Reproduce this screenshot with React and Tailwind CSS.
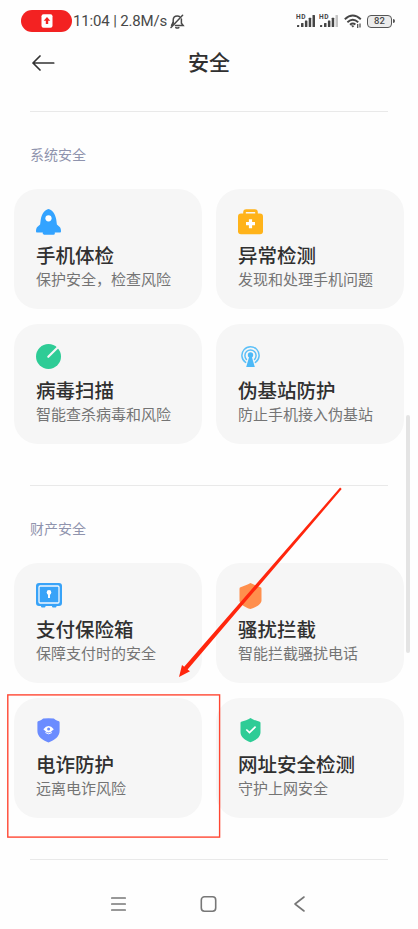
const RocketIcon = () => (
  <svg width="26" height="26" viewBox="0 0 26 26" fill="none">
    <path
      d="M12.5 0C16.4 .6 19.4 5.4 20.2 10.2L20.9 15.6L24 18.2C24.8 19.4 25 20.8 25 22.2C25 23.1 24.6 23.4 23.8 23.4H18.8V24.6C18.8 25.4 18.4 25.8 17.6 25.8H8C7.2 25.8 6.8 25.4 6.8 24.6V23.4H1.2C.4 23.4 0 23.1 0 22.2C0 20.8.2 19.4 1 18.2L4.1 15.6L4.8 10.2C5.6 5.4 8.6 .6 12.5 0Z"
      fill="#33a3ff"
    />
    <circle cx="12.5" cy="9.3" r="3.1" fill="#fff" />
  </svg>
);

const MedkitIcon = () => (
  <svg width="26" height="26" viewBox="0 0 26 26" fill="none">
    <path d="M6.5 6V3.3A1.7 1.7 0 0 1 8.2 1.6H16.8A1.7 1.7 0 0 1 18.5 3.3V6" stroke="#ffb31a" strokeWidth="2.6" />
    <rect x="0" y="4.5" width="25" height="20.8" rx="3" fill="#ffb31a" />
    <path d="M12.5 10.2V19.2M8 14.7H17" stroke="#fff" strokeWidth="3.2" />
  </svg>
);

const ScanIcon = () => (
  <svg width="26" height="26" viewBox="0 0 26 26" fill="none">
    <circle cx="12.5" cy="12.5" r="12.5" fill="#2ecc96" />
    <path d="M12.3 12.8L21.9 3.2" stroke="#f6f6f6" strokeWidth="2.2" strokeLinecap="round" />
  </svg>
);

const StationIcon = () => (
  <svg width="26" height="26" viewBox="0 0 26 26" fill="none">
    <path d="M7.6 18.4A8.6 8.6 0 1 1 17.4 18.4" stroke="#5cc0f8" strokeWidth="1.5" strokeLinecap="round" />
    <path d="M8.4 15.4A5.6 5.6 0 1 1 16.6 15.4" stroke="#5cc0f8" strokeWidth="1.5" strokeLinecap="round" />
    <circle cx="12.5" cy="10.9" r="2.7" fill="#4db9f7" />
    <path d="M11.4 12H13.6L16.8 23H8.2Z" fill="#4db9f7" />
  </svg>
);

const SafeIcon = () => (
  <svg width="26" height="26" viewBox="0 0 26 26" fill="none">
    <path d="M5 22H9.5V23.6A.8.8 0 0 1 8.7 24.4H5.8A.8.8 0 0 1 5 23.6ZM16 22H20.5V23.6A.8.8 0 0 1 19.7 24.4H16.8A.8.8 0 0 1 16 23.6Z" fill="#38a3f8" />
    <rect x="0" y="0" width="26" height="23" rx="3" fill="#38a3f8" />
    <rect x="3" y="3" width="20" height="17" rx="1.2" stroke="#f1f8fe" strokeWidth="1.3" />
    <circle cx="13" cy="9.4" r="2.3" fill="#fff" />
    <path d="M13 10V15" stroke="#fff" strokeWidth="1.9" />
  </svg>
);

const BlockShieldIcon = () => (
  <svg width="26" height="27" viewBox="0 0 26 27" fill="none">
    <path
      d="M12.5 0C15.5 1.6 19 3.2 22.5 4.2C23.2 4.5 23.5 5 23.5 5.8V17.5C23.5 21 18 24.6 12.5 26C7 24.6 1.5 21 1.5 17.5V5.8C1.5 5 1.8 4.5 2.5 4.2C6 3.2 9.5 1.6 12.5 0Z"
      fill="#ff8f4d"
    />
  </svg>
);

const EyeShieldIcon = () => (
  <svg width="26" height="26" viewBox="0 0 26 26" fill="none">
    <path
      d="M7.2 .5Q12.5 -.2 17.8 .5L19.8 2Q21.4 3 23 3.2Q23.6 3.4 23.6 4.4V13C23.6 18.6 18.6 22.2 12.5 24.4C6.4 22.2 1.4 18.6 1.4 13V4.4Q1.4 3.4 2 3.2Q3.6 3 5.2 2Z"
      fill="#6b8cff"
    />
    <path d="M7.4 11.3Q12.5 4.8 17.8 11.3Q12.5 17.6 7.4 11.3Z" fill="#fff" />
    <circle cx="12.6" cy="11" r="1.5" fill="#6b8cff" />
    <path d="M9.4 14.6Q12.6 17 15.8 14.6" stroke="#fff" strokeWidth="1" />
  </svg>
);

const CheckShieldIcon = () => (
  <svg width="26" height="26" viewBox="0 0 26 26" fill="none">
    <path
      d="M12.5 0C15.2 1.7 18.5 3 21.8 3.8C22.3 4 22.5 4.3 22.5 4.9V14.2C22.5 19 18 22.2 12.5 24.3C7 22.2 2.5 19 2.5 14.2V4.9C2.5 4.3 2.7 4 3.2 3.8C6.5 3 9.8 1.7 12.5 0Z"
      fill="#2ecc96"
    />
    <path d="M8.3 11.5L11.5 14.6L17.6 8.6" stroke="#fff" strokeWidth="1.7" />
  </svg>
);

const sections = [
  {
    label: '系统安全',
    items: [
      { title: '手机体检', desc: '保护安全，检查风险', icon: RocketIcon },
      { title: '异常检测', desc: '发现和处理手机问题', icon: MedkitIcon },
      { title: '病毒扫描', desc: '智能查杀病毒和风险', icon: ScanIcon },
      { title: '伪基站防护', desc: '防止手机接入伪基站', icon: StationIcon },
    ],
  },
  {
    label: '财产安全',
    items: [
      { title: '支付保险箱', desc: '保障支付时的安全', icon: SafeIcon },
      { title: '骚扰拦截', desc: '智能拦截骚扰电话', icon: BlockShieldIcon },
      { title: '电诈防护', desc: '远离电诈风险', icon: EyeShieldIcon },
      { title: '网址安全检测', desc: '守护上网安全', icon: CheckShieldIcon },
    ],
  },
];

const Signal = ({ weak }) => (
  <svg width="20" height="14" viewBox="0 0 20 14" fill="#454545">
    <text x="0" y="5.4" fontSize="6.6" fontWeight="700" fontFamily="Roboto, sans-serif" textLength="9.5">
      HD
    </text>
    <rect x="1" y="11" width="2.2" height="2" rx=".5" />
    <rect x="5" y="9" width="2.5" height="4" rx=".5" />
    <rect x="8.9" y="6.4" width="2.5" height="6.6" rx=".5" />
    <rect x="12.7" y="3.8" width="2.5" height="9.2" rx=".5" />
    <rect x="16.5" y="1" width="2.5" height="12" rx=".5" fill={weak ? '#c4c4c4' : '#454545'} />
  </svg>
);

const StatusBar = () => (
  <div className="flex h-[42px] items-center pl-[21px] pr-[23px] text-[#484848]">
    <div className="flex h-[22px] w-[51px] items-center justify-center rounded-full bg-[#f32222]">
      <svg width="12" height="14" viewBox="0 0 12 14" fill="none">
        <rect x=".5" y=".3" width="11" height="13.4" rx="2" fill="#fff" />
        <path d="M6 3L9.3 6.8H7.2V10H4.8V6.8H2.7Z" fill="#f32222" />
      </svg>
    </div>
    <span className="ml-px w-[95px] whitespace-nowrap text-[15px] leading-5 tracking-[-0.15px]">11:04 | 2.8M/s</span>
    <svg className="ml-0.5" width="15" height="15" viewBox="0 0 15 15" fill="none" stroke="#484848" strokeWidth="1.5" strokeLinecap="round">
      <path d="M3.2 9.2V6.2C3.2 3.6 5 2 7.3 2C8.2 2 9 2.2 9.6 2.7M11.4 5V9.2L13.2 11.6H5.4" />
      <path d="M3 8.5L1.6 11.4M5.8 13.6Q7.3 14.6 8.8 13.6M1 13.4L12.6 1.2" />
    </svg>
    <div className="ml-auto flex items-center">
      <Signal />
      <span className="w-[3px]" />
      <Signal weak />
      <svg className="ml-[5px]" width="18" height="15" viewBox="0 0 18 15" fill="none" stroke="#454545" strokeWidth="1.9">
        <path d="M.8 5.2Q8.8-2 16.8 5.2M3.4 8.2Q8.8 3.4 14.2 8.2M6 10.8Q8.8 8.5 11.4 10.6" />
        <path d="M7 11.6L8.8 13.6L10.3 12Q8.6 10.7 7 11.6Z" fill="#454545" stroke="none" />
        <path d="M13.7 10V14M16 9.6V13.4" strokeWidth="1.2" />
      </svg>
      <div className="ml-[5px] flex h-[13px] w-[25px] items-center justify-center rounded-[4px] border border-[#555] bg-[#ececec] text-[9.5px] font-medium leading-none">
        82
      </div>
      <span className="ml-px h-1 w-[2px] rounded-r-sm bg-[#555]" />
    </div>
  </div>
);

const FeatureCard = ({ title, desc, icon: Icon }) => (
  <div className="h-[120px] rounded-[24px] bg-[#f6f6f6] pl-[22px] pt-5">
    <div className="h-[26px]">
      <Icon />
    </div>
    <h3 className="mt-2.5 whitespace-nowrap text-[19.5px] font-medium leading-6 text-[#303030]">{title}</h3>
    <p className="mt-px whitespace-nowrap text-[15px] leading-5 text-[#747474]">{desc}</p>
  </div>
);

const Section = ({ label, items }) => (
  <section className="h-[374px] px-[14px]">
    <div className="mx-4 border-t border-[#e9e9e9]" />
    <h2 className="ml-4 pt-[33px] text-[14px] leading-5 text-[#8f93ad]">{label}</h2>
    <div className="mt-6 grid grid-cols-2 gap-x-[14px] gap-y-[14.5px]">
      {items.map((item) => (
        <FeatureCard key={item.title} {...item} />
      ))}
    </div>
  </section>
);

export default function App() {
  return (
    <div className="relative flex h-[929px] w-[418px] flex-col overflow-hidden bg-[#fefefe] font-['Roboto','Noto_Sans_CJK_SC',sans-serif]">
      <StatusBar />

      <header className="grid h-[42px] grid-cols-3 items-center">
        <svg className="ml-8" width="23" height="16" viewBox="0 0 23 16" fill="none" stroke="#333" strokeWidth="1.7" strokeLinecap="round" strokeLinejoin="round">
          <path d="M21.7 8H1M8 1L1 8L8 15" />
        </svg>
        <h1 className="pt-0.5 text-center text-[21px] font-medium text-[#303030]">安全</h1>
      </header>

      <main className="pt-[27px]">
        {sections.map((section) => (
          <Section key={section.label} {...section} />
        ))}
        <div className="mx-[30px] border-t border-[#e9e9e9]" />
      </main>

      <nav className="mt-[35px] flex items-center justify-between pl-[110px] pr-[110px]">
        <svg width="17" height="18" viewBox="0 0 17 18" fill="none" stroke="#777" strokeWidth="1.7" strokeLinecap="round">
          <path d="M1.8 3H15.2M1.8 9H15.2M1.8 15H15.2" />
        </svg>
        <svg width="18" height="18" viewBox="0 0 18 18" fill="none" stroke="#777" strokeWidth="1.6">
          <rect x="1.3" y="1.8" width="14.4" height="14.4" rx="3.2" />
        </svg>
        <svg width="17" height="18" viewBox="0 0 17 18" fill="none" stroke="#777" strokeWidth="1.6" strokeLinecap="round" strokeLinejoin="round">
          <path d="M13 2L4 9L13 16" />
        </svg>
      </nav>

      {/* Scroll indicator */}
      <div className="absolute left-[406px] top-[415px] h-[238px] w-1 rounded-full bg-[#e4e4e4]" />

      {/* Highlight around the anti-fraud card and the arrow that leads to it */}
      <svg className="absolute left-0 top-0" width="418" height="929" viewBox="0 0 418 929" fill="none">
        <rect x="7.8" y="694.9" width="211.8" height="142.2" stroke="#ff4632" strokeWidth="1.4" />
        <path d="M340.1 487.6L341.7 489.1L187.6 669.4L190 671.2L179 677L182 665L184.2 666.8Z" fill="#ff260d" />
      </svg>
    </div>
  );
}
